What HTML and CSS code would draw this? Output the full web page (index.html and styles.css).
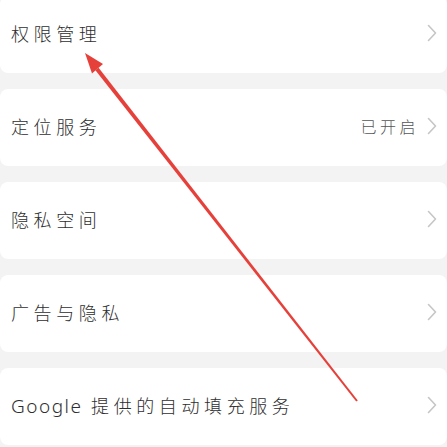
FILE: index.html
```html
<!DOCTYPE html>
<html lang="zh-CN">
<head>
<meta charset="utf-8">
<link rel="stylesheet" href="styles.css">
</head>
<body>
<div class="list">
  <div class="row"><span class="label">权限管理</span><span class="right"><svg class="chev" viewBox="0 0 10 18" width="10" height="18"><path d="M1.5 1.5 L8.5 9 L1.5 16.5"/></svg></span></div>
  <div class="row"><span class="label">定位服务</span><span class="right"><span class="value">已开启</span><svg class="chev" viewBox="0 0 10 18" width="10" height="18"><path d="M1.5 1.5 L8.5 9 L1.5 16.5"/></svg></span></div>
  <div class="row"><span class="label">隐私空间</span><span class="right"><svg class="chev" viewBox="0 0 10 18" width="10" height="18"><path d="M1.5 1.5 L8.5 9 L1.5 16.5"/></svg></span></div>
  <div class="row"><span class="label">广告与隐私</span><span class="right"><svg class="chev" viewBox="0 0 10 18" width="10" height="18"><path d="M1.5 1.5 L8.5 9 L1.5 16.5"/></svg></span></div>
  <div class="row"><span class="label"><span class="latin">Google</span> 提供的自动填充服务</span><span class="right"><svg class="chev" viewBox="0 0 10 18" width="10" height="18"><path d="M1.5 1.5 L8.5 9 L1.5 16.5"/></svg></span></div>
</div>
<svg class="arrow" viewBox="0 0 447 447" width="447" height="447">
  <polygon points="98.6,67.8 95.4,70.2 356.2,401.6 357.8,400.4"/>
  <polygon points="85,53 103,64 92,73.5"/>
</svg>
</body>
</html>
```
FILE: styles.css
```css
html, body {
  margin: 0;
  padding: 0;
  width: 447px;
  height: 447px;
  overflow: hidden;
  background: #f3f3f3;
}
body {
  position: relative;
  font-family: "Noto Sans CJK SC", "Noto Sans", sans-serif;
}
.list {
  display: flex;
  flex-direction: column;
  gap: 16px;
  margin-top: -4px;
}
.row {
  height: 77px;
  background: #ffffff;
  border-radius: 8px;
  display: flex;
  align-items: center;
  justify-content: space-between;
  padding: 0 10px 3px 11px;
  box-sizing: border-box;
}
.label {
  font-size: 18px;
  font-weight: 300;
  letter-spacing: 4.6px;
  color: #2e2e2e;
}
.latin {
  font-family: "Noto Sans", sans-serif;
  letter-spacing: 1.5px;
  font-size: 19px;
}
.right {
  display: flex;
  align-items: center;
  gap: 8px;
}
.value {
  font-size: 16px;
  font-weight: 300;
  letter-spacing: 3.5px;
  color: #555555;
}
.chev {
  display: block;
}
.chev path {
  fill: none;
  stroke: #c6c6c6;
  stroke-width: 1.6;
  stroke-linecap: round;
  stroke-linejoin: round;
}
.arrow {
  position: absolute;
  left: 0;
  top: 0;
}
.arrow polygon {
  fill: #e6403b;
}
```
